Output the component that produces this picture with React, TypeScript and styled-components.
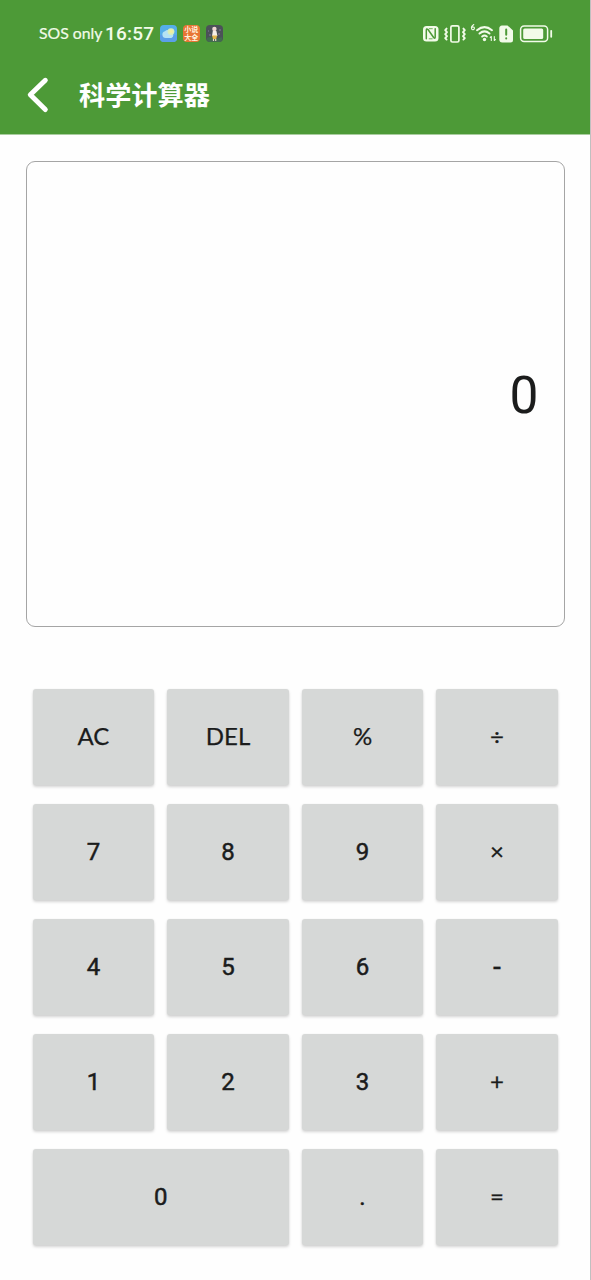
import React from "react";
import styled, { createGlobalStyle } from "styled-components";

const GlobalStyle = createGlobalStyle`
  * { box-sizing: border-box; }
  body { margin: 0; background: #fff; }
`;

const Screen = styled.main`
  width: 591px;
  height: 1280px;
  display: flex;
  flex-direction: column;
  overflow: hidden;
  background: #fefefe;
  border-right: 1px solid #c0c0c0;
  font-family: Roboto, "Noto Sans CJK SC", sans-serif;
  color: #1b1c1c;
`;

const Header = styled.header`
  flex: none;
  height: 134px;
  margin-right: -1px;
  border-right: 1px solid #438432;
  background: #4d9a37;
  color: #fff;
  box-shadow: 0 1px 0 #a9cd9f;
`;

const StatusBar = styled.div`
  height: 67px;
  padding: 0 37px 0 39px;
  display: flex;
  align-items: center;
  color: #f2fbe9;
`;

const Carrier = styled.span`
  width: 66px;
  padding-bottom: 1px;
  font: 400 15.8px/20px Lato, sans-serif;
  -webkit-text-stroke: 0.2px currentColor;
  white-space: nowrap;
`;

const Clock = styled.time`
  width: 55px;
  padding-top: 1px;
  font: 500 19px/20px Roboto, sans-serif;
  letter-spacing: 0.2px;
`;

const AppIcons = styled.div`
  display: flex;
  gap: 6px;
  svg { display: block; }
`;

const SystemIcons = styled.div`
  margin-left: auto;
  svg { display: block; }
`;

const TitleBar = styled.div`
  height: 67px;
  padding: 9px 0 0 26px;
  display: flex;
  align-items: flex-start;
`;

const Back = styled.button`
  width: 53px;
  height: 38px;
  padding: 0;
  border: 0;
  background: none;
  display: flex;
`;

const Title = styled.h1`
  margin: 0;
  font: 700 26.2px/36px "Noto Sans CJK SC", sans-serif;
`;

const Display = styled.output`
  flex: none;
  height: 466px;
  margin: 27px 25.5px 0 26px;
  padding: 3px 25px 0 0;
  display: flex;
  align-items: center;
  justify-content: flex-end;
  border: 1px solid #a5a5a5;
  border-radius: 9px;
  font-size: 51.5px;
  line-height: 60px;
`;

const Keypad = styled.div`
  margin: 62px 32px 0 32.5px;
  display: grid;
  grid-template-columns: repeat(4, 1fr);
  grid-auto-rows: 96px;
  gap: 19px 12.6px;
`;

const Key = styled.button<{ $wide?: boolean; $face?: "text" | "minus" }>`
  grid-column: span ${(p) => (p.$wide ? 2 : 1)};
  padding: 0 0 ${(p) => (p.$face ? 2 : 0)}px;
  border: 0;
  border-radius: 3px;
  background: #d6d8d7;
  box-shadow: 0 2px 3px rgba(0, 0, 0, 0.17), 0 0 2px rgba(0, 0, 0, 0.06);
  color: #1b1c1c;
  font-family: ${(p) => (p.$face ? "Lato, sans-serif" : "Roboto, sans-serif")};
  font-size: ${(p) => (p.$face === "minus" ? 28 : 24)}px;
  font-weight: 400;
  line-height: 28px;
  -webkit-text-stroke: ${(p) => (p.$face ? 0.25 : 0.5)}px currentColor;
`;

type KeyDef = { label: string; wide?: boolean; face?: "text" | "minus" };

const keys: KeyDef[] = [
  { label: "AC", face: "text" },
  { label: "DEL", face: "text" },
  { label: "%", face: "text" },
  { label: "÷", face: "text" },
  { label: "7" },
  { label: "8" },
  { label: "9" },
  { label: "×", face: "text" },
  { label: "4" },
  { label: "5" },
  { label: "6" },
  { label: "-", face: "minus" },
  { label: "1" },
  { label: "2" },
  { label: "3" },
  { label: "+", face: "text" },
  { label: "0", wide: true },
  { label: "." },
  { label: "=", face: "text" },
];

const WeatherIcon = () => (
  <svg width="17" height="17" viewBox="0 0 17 17">
    <rect width="17" height="17" rx="4" fill="#55aee9" />
    <path d="M0 10h17v3a4 4 0 0 1-4 4H4a4 4 0 0 1-4-4z" fill="#5b9fe8" />
    <path d="M5.6 13a3.4 3.4 0 0 1-.6-6.7 3.5 3.5 0 0 1 6 1.1 2.9 2.9 0 0 1 .4 5.6z" fill="#b5e3f4" />
    <circle cx="11" cy="6.6" r="3.4" fill="#d9eeb8" />
    <circle cx="11.2" cy="6.4" r="1.7" fill="#f2ee9c" />
  </svg>
);

const NovelTile = styled.span`
  width: 17px;
  height: 17px;
  padding: 0 1.2px;
  border-radius: 4px;
  background: #e87535;
  color: #fff4df;
  font: 700 7px/8px "Noto Sans CJK SC", sans-serif;
  word-break: break-all;
`;

const FigureIcon = () => (
  <svg width="17" height="17" viewBox="0 0 17 17">
    <rect width="17" height="17" rx="4" fill="#4b5158" />
    <path d="M1 13q3-2 6 0t9-1v2a3 3 0 0 1-3 3H4a3 3 0 0 1-3-3z" fill="#426b50" />
    <path d="M2 6h1M13 5h2M3 10h2M12 9h2" stroke="#8a78a0" strokeWidth="1" />
    <circle cx="8.4" cy="4" r="2.2" fill="#f0d9d3" />
    <path d="M6.8 6h3.6l1 5H6z" fill="#f5eee8" />
    <path d="M6 10.5h5.2l-1 3.5H7z" fill="#e4b84c" />
    <path d="M7.5 14v2M9.7 14v2" stroke="#f1d6c8" strokeWidth="1.2" />
  </svg>
);

const StatusGlyphs = () => (
  <svg width="131" height="24" viewBox="0 0 131 24" fill="none" stroke="#f2fbe9" strokeLinecap="round" strokeLinejoin="round">
    <rect x="1" y="4" width="15.5" height="15.5" rx="3.5" fill="#f2fbe9" stroke="none" />
    <path d="M4.3 16.7V8.2q0-2.2 1.7-.7l5.8 8.3q1.4 1.2 1.4-.8V6.8" stroke="#4d9a37" strokeWidth="1.5" />
    <path d="M7.3 6.7h3M7.2 16.8h3" stroke="#4d9a37" strokeWidth="0.8" />
    <rect x="28.9" y="3.8" width="8" height="16.2" rx="1.5" strokeWidth="1.7" />
    <path d="M24.6 6.6l-1.4 1.6 1.8 2-1.8 2 1.8 2-1.8 2 1.4 1.4M41.4 6.6l1.4 1.6-1.8 2 1.8 2-1.8 2 1.8 2-1.4 1.4" strokeWidth="1.9" />
    <path d="M51.8 2.5q-3 2-2.2 4.1a1.4 1.4 0 0 0 2.8-.7q-.3-1.2-2-.8" strokeWidth="1.1" />
    <path d="M55 8.2q7.5-6.2 15 0M57.5 11.5q5-4.2 10 0M60.2 14.5q2.3-1.9 4.6 0" strokeWidth="2" />
    <circle cx="62.5" cy="17.5" r="1.7" fill="#f2fbe9" stroke="none" />
    <path d="M69.3 18.5v-4l-1 1M72.3 14.5v4l1-1" strokeWidth="1.1" />
    <path d="M80 3.4h5.5l5.5 5V18a2.5 2.5 0 0 1-2.5 2.5h-8.2a3 3 0 0 1-3-3V6.4a3 3 0 0 1 2.7-3z" fill="#f2fbe9" stroke="none" />
    <path d="M84.2 7.6v5.2M84.2 16.3v.1" stroke="#4d9a37" strokeWidth="2" />
    <rect x="98.6" y="4" width="27" height="15.4" rx="3.5" strokeWidth="1.5" />
    <rect x="101.2" y="6.5" width="20" height="10.4" rx="1.5" fill="#f2fbe9" stroke="none" />
    <path d="M129.2 8.8v6" strokeWidth="1.8" />
  </svg>
);

export default function App() {
  return (
    <>
      <GlobalStyle />
      <Screen>
        <Header>
          <StatusBar>
            <Carrier>SOS only</Carrier>
            <Clock>16:57</Clock>
            <AppIcons>
              <WeatherIcon />
              <NovelTile>小说大全</NovelTile>
              <FigureIcon />
            </AppIcons>
            <SystemIcons>
              <StatusGlyphs />
            </SystemIcons>
          </StatusBar>
          <TitleBar>
            <Back aria-label="返回">
              <svg width="24" height="38" viewBox="0 0 24 38" fill="none" stroke="#fff" strokeWidth="5" strokeLinecap="round" strokeLinejoin="round">
                <path d="M19.3 4.3 4.3 18.8 19.3 33.5" />
              </svg>
            </Back>
            <Title>科学计算器</Title>
          </TitleBar>
        </Header>
        <Display>0</Display>
        <Keypad>
          {keys.map((k) => (
            <Key key={k.label} $wide={k.wide} $face={k.face}>
              {k.label}
            </Key>
          ))}
        </Keypad>
      </Screen>
    </>
  );
}
